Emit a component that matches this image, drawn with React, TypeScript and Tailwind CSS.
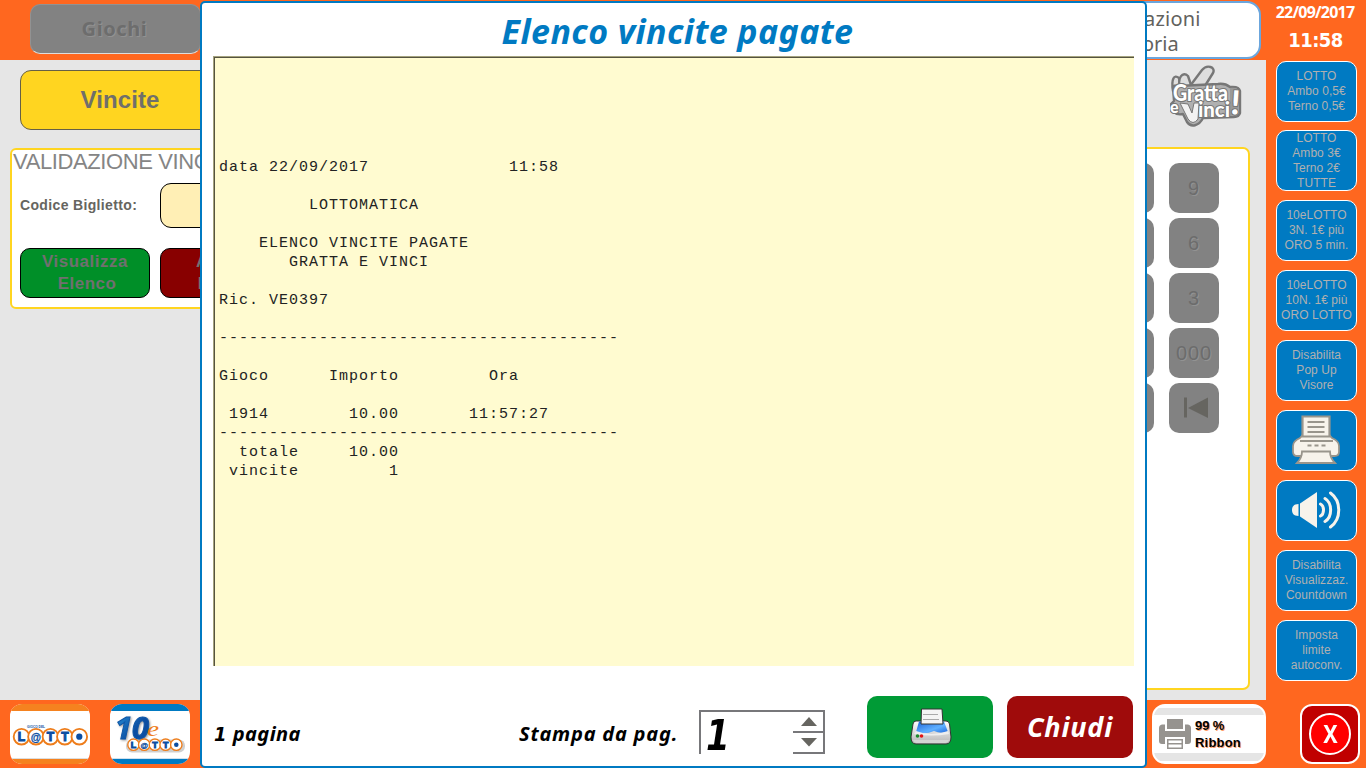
import React from "react";

const receipt = [
  "data 22/09/2017              11:58",
  "",
  "         LOTTOMATICA",
  "",
  "    ELENCO VINCITE PAGATE",
  "       GRATTA E VINCI",
  "",
  "Ric. VE0397",
  "",
  "----------------------------------------",
  "",
  "Gioco      Importo         Ora",
  "",
  " 1914        10.00       11:57:27",
  "----------------------------------------",
  "  totale     10.00",
  " vincite         1",
].join("\n");

const keys = [
  ["8", "9"],
  ["5", "6"],
  ["2", "3"],
  ["00", "000"],
];

function LottoRings({ x, y, r, step }: { x: number; y: number; r: number; step: number }) {
  return (
    <g>
      {["L", "@", "T", "T", ""].map((c, i) => (
        <g key={i}>
          <circle cx={x + i * step} cy={y} r={r} fill="#fff" stroke="#ee7d1b" strokeWidth={r * 0.24} />
          {c ? (
            <text
              x={x + i * step}
              y={y + r * 0.56}
              textAnchor="middle"
              fontFamily="Liberation Sans, sans-serif"
              fontWeight="bold"
              fontSize={c === "@" ? r * 1.35 : r * 1.55}
              fill="#0b4ea2"
              stroke="#0b4ea2"
              strokeWidth={c === "@" ? 0.3 : 1}
            >
              {c}
            </text>
          ) : (
            <circle cx={x + i * step} cy={y} r={r * 0.4} fill="#0b4ea2" />
          )}
        </g>
      ))}
    </g>
  );
}

function LottoLogo() {
  return (
    <svg width="80" height="60" viewBox="0 0 80 60">
      <defs>
        <clipPath id="lc"><rect width="80" height="60" rx="12" /></clipPath>
      </defs>
      <g clipPath="url(#lc)">
        <rect width="80" height="60" fill="#fff" />
        <rect width="80" height="7" fill="#f5821f" />
        <rect y="54" width="80" height="1" fill="#ddd" />
        <rect y="55" width="80" height="5" fill="#f5821f" />
        <text x="26" y="24" textAnchor="middle" fontSize="4" fontWeight="bold" fontFamily="Liberation Sans, sans-serif" fill="#0b4ea2" textLength="18" lengthAdjust="spacingAndGlyphs">GIOCO DEL</text>
        <LottoRings x={11.500} y={32.7} r={7.8} step={14.450} />
      </g>
    </svg>
  );
}

function TenLottoLogo() {
  return (
    <svg width="80" height="60" viewBox="0 0 80 60">
      <defs>
        <clipPath id="tc"><rect width="80" height="60" rx="12" /></clipPath>
        <linearGradient id="tg" x1="0" y1="0" x2="1" y2="1">
          <stop offset="0" stopColor="#2a9be0" />
          <stop offset="0.6" stopColor="#0b4ea2" />
        </linearGradient>
      </defs>
      <g clipPath="url(#tc)">
        <rect width="80" height="60" fill="#fff" />
        <rect width="80" height="7" fill="#007ac2" />
        <rect y="54" width="80" height="1" fill="#cfe0ee" />
        <rect y="55" width="80" height="5" fill="#007ac2" />
        <rect x="16" y="35.500" width="59" height="13" rx="6" fill="#cfcfcf" />
        <text x="5" y="34.5" fontSize="31" fontWeight="bold" fontStyle="italic" fontFamily="Noto Sans, sans-serif" fill="url(#tg)" stroke="#0f57a8" strokeWidth="1" textLength="34" lengthAdjust="spacingAndGlyphs" className="drop-shadow-[1px_1px_1px_#999]">10</text>
        <text x="37" y="32" fontSize="20" fontStyle="italic" fontFamily="Liberation Serif, serif" fill="#ee7d1b" textLength="12" lengthAdjust="spacingAndGlyphs">e</text>
        <LottoRings x={23.500} y={40.700} r={5.700} step={10.700} />
      </g>
    </svg>
  );
}

function GrattaLogo() {
  return (
    <svg width="72" height="62" viewBox="0 0 72 62">
      <g stroke="#777" strokeWidth="2.4" strokeLinejoin="round" fill="#dedede">
        <path d="M3 26 C1 14 4 9 9 13 L11 24 Z" />
        <path d="M10 24 C7 12 13 6 18 11 L22 23 Z" />
        <path d="M20 21 L32 5 C37 -1 46 2 43 8 L33 24 Z" />
        <path d="M3 22 Q3 20 8 21 L48 19 Q55 18 60 22 Q69 21 70 26 L70 48 Q69 52 64 52 L33 53 C29 61 21 63 17 57 L13 49 C5 51 -1 44 1 39 L4 36 Z" fill="#b0b0b0" />
      </g>
      <path d="M60 23 Q69 22 69 28 L68 49 L60 51 Z" fill="#999" />
      <g fontFamily="Lato, sans-serif" fontWeight="900" fill="#fff" stroke="#777" strokeWidth="2.2" paintOrder="stroke" strokeLinejoin="round">
        <text x="3" y="36" fontSize="22" textLength="55" lengthAdjust="spacingAndGlyphs">Gratta</text>
        <text x="0" y="48" fontSize="16">e</text>
        <text x="28" y="51.500" fontSize="20" textLength="32" lengthAdjust="spacingAndGlyphs">inci</text>
        <text x="60" y="49" fontSize="33" transform="rotate(4 60 50)">!</text>
      </g>
      <path d="M10 38 L18 39 L22 48 L24 38 L29 38 L28 54 Q23 61 18 54 Z" fill="#f2f2f2" stroke="#777" strokeWidth="1" />
    </svg>
  );
}

function SidePrinter() {
  return (
    <svg width="50" height="50" viewBox="0 0 50 50" fill="#f7f3eb" stroke="#99958c" strokeWidth="1.800" className="-mt-px -ml-px">
      <path d="M9 23 L13 18.500 H37 L41 23 Q48 26 48 31 V37 Q48 41 43.500 41 H6.500 Q2 41 2 37 V31 Q2 26 9 23 Z" />
      <path d="M11.500 1.500 H38.500 V21.500 H11.500 Z" strokeWidth="2.200" />
      <path d="M16.500 7 H33.500 M16.500 12 H33.500 M16.500 17 H33.500" />
      <path d="M9 26 H42" />
      <path d="M16.500 30.500 H20.500 M23.500 30.500 H27.500 M30.500 30.500 H34.500" strokeWidth="2.200" />
      <path d="M11 36.500 H39 Q39 43 44 48 H6 Q11 43 11 36.500 Z" />
    </svg>
  );
}

function Speaker() {
  return (
    <svg width="50" height="42" viewBox="0 0 50 42" fill="#f7f3eb" className="-mt-px -ml-[2px]">
      <path d="M7.500 15 V27 C2.500 27 1 24 1 21 C1 18 2.500 15 7.500 15 Z" />
      <path d="M9 14.500 L26 3 V39 L9 27.500 Z" />
      <g fill="none" stroke="#f7f3eb" strokeWidth="3" strokeLinecap="round">
        <path d="M29.500 15 C33.500 17 33.500 25 29.500 27" />
        <path d="M34 9.500 C41.500 14 41.500 28 34 32.500" />
        <path d="M39.500 4 C50.500 12 50.500 30 39.500 38" />
      </g>
    </svg>
  );
}

function RibbonPrinter() {
  return (
    <svg width="32" height="31" viewBox="0 0 32 31" fill="#96938f">
      <rect x="8" y="0" width="16" height="10" />
      <path d="M3 5.500 H6 V12 H26 V5.500 H29 Q32 6 32 9 V22 Q32 25 29 25 H26 V18 H6 V25 H3 Q0 25 0 22 V9 Q0 6 3 5.500 Z" />
      <path d="M8 20 H24 V30 H8 Z M9.500 21.500 V24 H22.500 V21.500 Z M9.500 25.500 V28.500 H22.500 V25.500 Z" fillRule="evenodd" />
    </svg>
  );
}

function ColorPrinter() {
  return (
    <svg width="42" height="38" viewBox="0 0 42 38" className="ml-[2px]">
      <defs>
        <linearGradient id="pb" x1="0" y1="0" x2="0" y2="1">
          <stop offset="0" stopColor="#fff" /><stop offset="1" stopColor="#b5b5b5" />
        </linearGradient>
        <linearGradient id="pw" x1="0" y1="0" x2="1" y2="1">
          <stop offset="0" stopColor="#1b62d8" /><stop offset="0.6" stopColor="#5fb0ff" /><stop offset="1" stopColor="#1d66dc" />
        </linearGradient>
      </defs>
      <path d="M6 13 H36 Q39 13 39.500 16 L41 29 Q41 36 36 36 H6 Q1 36 1 29 L3 16 Q3.500 13 6 13 Z" fill="url(#pb)" stroke="#333" strokeWidth="1" />
      <path d="M9 13.500 H34 L38 24 Q30 26 24 23 Q15 27 6 24 Z" fill="url(#pw)" />
      <path d="M11.500 1 H32 L33 16 H11 Z" fill="#f5f5f5" stroke="#333" strokeWidth="1" />
      <path d="M13 6.500 H28 M13 11.500 H29" stroke="#aaa" />
      <path d="M6 23 Q21 29 38 23 L39 26 Q21 29 4 26 Z" fill="#eee" />
      <circle cx="7.500" cy="28" r="1.800" fill="#1c8a2d" />
      <circle cx="11.500" cy="28" r="1.800" fill="#e01515" />
      <path d="M3 32 Q4 35 7 35 H35 Q38 35 39 32 Z" fill="#d5d5d5" />
    </svg>
  );
}

function SideButton({ lines, children }: { lines?: string[]; children?: React.ReactNode }) {
  return (
    <button className="flex h-[61px] w-[81px] shrink-0 flex-col items-center justify-center rounded-[10px] border border-white bg-[#007ac2] text-center text-[12px] leading-[15px] tracking-[0.05px] whitespace-nowrap text-[#b0b0b0]">
      {lines ? lines.map((l) => <span key={l}>{l}</span>) : children}
    </button>
  );
}

function Key({ children }: { children: React.ReactNode }) {
  return (
    <div className="flex h-[50px] w-[50px] items-center justify-center rounded-[10px] bg-[#828282] text-[20px] tracking-[0.8px] text-[#6c6c6c] [text-shadow:1px_1px_0_#929292]">
      {children}
    </div>
  );
}

function RewindIcon() {
  return (
    <svg width="26" height="22" viewBox="0 0 26 22" fill="#666560" className="ml-[3px]">
      <rect x="1" y="0.500" width="3" height="20" />
      <path d="M5 11 L25 0.500 V21 Z" />
    </svg>
  );
}

function Background() {
  return (
    <div className="flex h-full w-full">
      <main className="flex w-[1266px] flex-col">
        <header className="flex h-[60px] items-start justify-between bg-[#ff671f] pr-[5px] pl-[30px]">
          <div className="mt-1 flex h-[50px] w-[171px] items-center justify-center rounded-[10px] border border-[#929292] border-b-[#ddd] bg-[#828282] pr-[2px] font-['Noto_Sans',sans-serif] text-[20px] font-bold tracking-[0.6px] text-[#6d6d6d] [text-shadow:1px_1px_0_#929292]">
            Giochi
          </div>
          <div className="mt-[1px] h-[58px] w-[181px] rounded-[14px] border-2 border-[#6ba6dd] bg-white pt-[3px] pl-[62px] font-['Noto_Sans',sans-serif] text-[20px] leading-[25px] text-[#62625e]">
            <div className="tracking-[0.2px]">azioni</div>
            <div className="-ml-[2px]">oria</div>
          </div>
        </header>

        <section className="flex h-[640px] justify-between bg-[#e6e6e6] pr-4 pl-[10px]">
          <div className="flex w-[400px] flex-col pt-[10px]">
            <div className="ml-[10px] flex h-[60px] w-[200px] items-center justify-center rounded-[11px] border border-[#666045] bg-[#ffd520] text-[24px] font-bold tracking-[0.1px] text-[#706f6b]">
              Vincite
            </div>
            <div className="mt-[18px] flex h-[161px] flex-col rounded-[6px] border-2 border-[#ffd520] bg-white">
              <div className="pt-px pl-[1px] text-[22px] leading-[22px] tracking-[-0.4px] text-[#858585]">VALIDAZIONE VINCITE</div>
              <div className="mt-[10px] flex items-center pl-2">
                <div className="w-[140px] text-[14px] font-bold tracking-[0.35px] text-[#666560]">Codice Biglietto:</div>
                <div className="h-[45px] w-[200px] rounded-[11px] border border-black bg-[#ffefb5]" />
              </div>
              <div className="mt-[20px] flex gap-[10px] pl-2 text-center text-[17px] leading-[22px] font-bold tracking-[0.5px] text-[#707070]">
                <div className="h-[50px] w-[130px] rounded-[10px] border border-black bg-[#008f28] pt-[2px]">
                  Visualizza
                  <div className="pl-1">Elenco</div>
                </div>
                <div className="h-[50px] w-[130px] rounded-[10px] border border-black bg-[#880000] pt-[2px]">
                  Azzera
                  <div className="pl-1">Elenco</div>
                </div>
              </div>
            </div>
          </div>
          <div className="flex w-[400px] flex-col">
            <div className="flex h-[87px] justify-end pt-[5px] pr-[8px]">
              <GrattaLogo />
            </div>
            <div className="flex h-[543px] justify-end rounded-[7px] border-2 border-[#ffd520] bg-white pt-[14px] pr-[29px]">
              <div className="grid h-fit grid-cols-[50px_50px] gap-x-[15px] gap-y-[5px]">
                {keys.flat().map((k) => (
                  <Key key={k}>{k}</Key>
                ))}
                <Key>{""}</Key>
                <Key>
                  <RewindIcon />
                </Key>
              </div>
            </div>
          </div>
        </section>

        <footer className="flex h-[68px] items-start justify-between bg-[#ff671f] pl-[10px]">
          <div className="flex gap-5 pt-1">
            <LottoLogo />
            <TenLottoLogo />
          </div>
          <div className="mt-1 flex h-[60px] w-[114px] items-center rounded-[13px] border-2 border-white bg-[linear-gradient(#fff_2px,#e5e5e5_2px,#e5e5e5_9px,#fff_9px,#fff_47px,#e5e5e5_47px,#e5e5e5_55px,#fff_55px)] pl-[5px]">
            <RibbonPrinter />
            <div className="ml-[4px] text-[13px] leading-[17px] font-bold text-black [text-shadow:1px_1px_0_#ff9a66]">
              <div className="tracking-[-0.1px]">99 %</div>
              <div className="tracking-[0.2px]">Ribbon</div>
            </div>
          </div>
        </footer>
      </main>

      <aside className="flex w-[100px] flex-col items-center bg-[#ff671f] pl-[1px]">
        <div className="mt-[2px] -ml-[3px] font-['Noto_Sans',sans-serif] text-[16px] leading-[20px] font-bold tracking-[-0.8px] text-white">22/09/2017</div>
        <div className="mt-[4px] -ml-[2px] font-['DejaVu_Sans_Condensed','DejaVu_Sans',sans-serif] text-[20px] leading-[28px] font-bold tracking-[-0.6px] text-white">11:58</div>
        <div className="mt-[7px] flex flex-col gap-[9px]">
          <div className="-mb-px"><SideButton lines={["LOTTO", "Ambo 0,5€", "Terno 0,5€"]} /></div>
          <SideButton lines={["LOTTO", "Ambo 3€", "Terno 2€", "TUTTE"]} />
          <SideButton lines={["10eLOTTO", "3N. 1€ più", "ORO 5 min."]} />
          <SideButton lines={["10eLOTTO", "10N. 1€ più", "ORO LOTTO"]} />
          <SideButton lines={["Disabilita", "Pop Up", "Visore"]} />
          <SideButton><SidePrinter /></SideButton>
          <SideButton><Speaker /></SideButton>
          <SideButton lines={["Disabilita", "Visualizzaz.", "Countdown"]} />
          <SideButton lines={["Imposta", "limite", "autoconv."]} />
        </div>
        <div className="mt-[23px] ml-[27px] flex h-[60px] w-[60px] items-center justify-center rounded-[12px] border-2 border-white bg-[#c00000]">
          <div className="flex h-[42px] w-[42px] items-center justify-center rounded-full border-2 border-white bg-[#ff0000] font-['Noto_Sans',sans-serif] text-[25px] leading-none font-bold text-white">
            <span className="-mt-px scale-x-[0.86]">X</span>
          </div>
        </div>
      </aside>
    </div>
  );
}

function Modal() {
  return (
    <div className="absolute top-px left-[200px] flex h-[767px] w-[947px] flex-col rounded-[5px] border-2 border-[#007ac2] bg-white px-[11px] font-['Noto_Sans',sans-serif]">
      <h1 className="flex h-[53px] items-center justify-center pt-[2px] pl-[8px] text-[34px] leading-none font-bold tracking-[0.4px] whitespace-nowrap text-[#007ac2] italic">
        Elenco vincite pagate
      </h1>
      <div className="h-[610px] border-t border-l border-[#a5a37f]">
        <div className="h-full border-t border-l border-[#55533f] bg-[#fffbd0]">
          <pre className="pt-[100px] pl-1 font-['Liberation_Mono',monospace] text-[15px] leading-[19px] tracking-[0.998px] text-[#222]">
            {receipt}
          </pre>
        </div>
      </div>
      <div className="flex h-[100px] items-start pt-[30px] text-black">
        <div className="mt-[25px] w-[306px] pl-px text-[20px] leading-[26px] font-bold tracking-[0.45px] italic">
          <span className="font-['DejaVu_Sans_Condensed','DejaVu_Sans',sans-serif]">1</span> pagina
        </div>
        <div className="mt-[25px] w-[180px] text-[20px] leading-[26px] font-bold tracking-[0.8px] whitespace-nowrap italic">Stampa da pag.</div>
        <div className="mt-[14px] flex h-[44px] w-[126px] justify-between border-t-2 border-l-2 border-[#77777a] pl-[5px]">
          <div className="font-['DejaVu_Sans_Condensed','DejaVu_Sans',sans-serif] text-[42px] leading-[48px] font-bold italic">
            <span className="inline-block origin-left scale-x-90">1</span>
          </div>
          <div className="flex w-[32px] flex-col">
            <div className="flex h-[21px] items-center border-r-2 border-b-2 border-[#77777a] pl-2">
              <svg width="16" height="9" viewBox="0 0 16 9"><path d="M0 9 L8 0 L16 9 Z" fill="#666560" /></svg>
            </div>
            <div className="flex h-[22px] items-center border-r-2 border-b-2 border-[#77777a] pl-2">
              <svg width="16" height="9" viewBox="0 0 16 9"><path d="M0 0 L8 8.500 L16 0 Z" fill="#666560" /></svg>
            </div>
          </div>
        </div>
        <button className="ml-[42px] flex h-[62px] w-[126px] items-center justify-center rounded-[10px] bg-[#009b36]">
          <ColorPrinter />
        </button>
        <button className="ml-[14px] flex h-[62px] w-[126px] items-center justify-center rounded-[10px] bg-[#9f0b0b] text-[27px] font-bold tracking-[0.8px] text-white italic">
          Chiudi
        </button>
      </div>
    </div>
  );
}

export default function App() {
  return (
    <div className="relative h-[768px] w-[1366px] overflow-hidden bg-[#ff671f] font-['Liberation_Sans',sans-serif]">
      <Background />
      <Modal />
    </div>
  );
}
